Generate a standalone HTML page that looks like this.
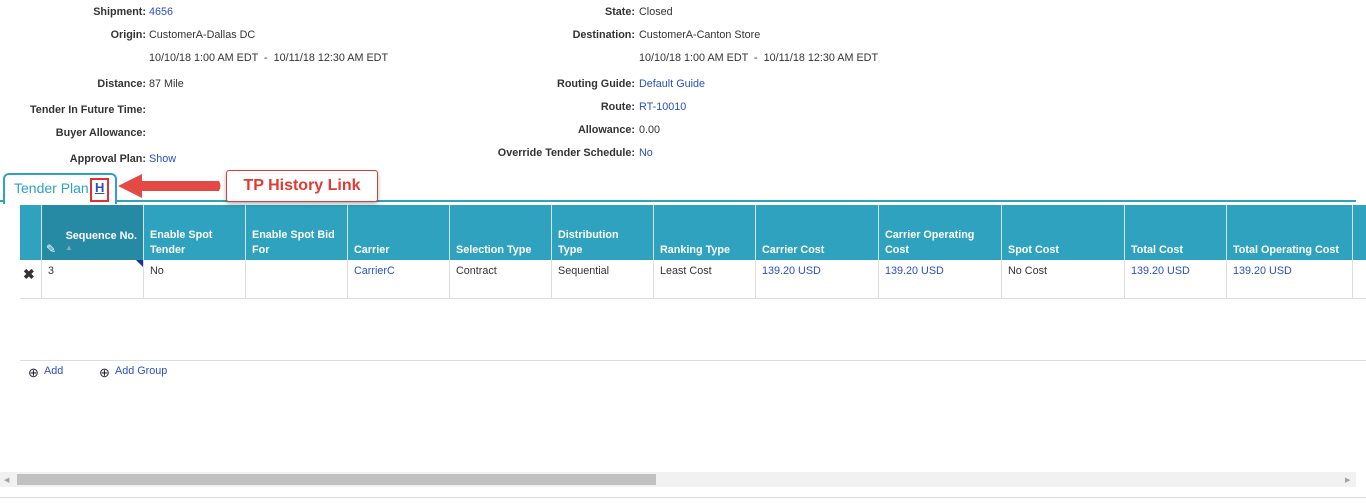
<!DOCTYPE html><html><head><style>
body{margin:0;width:1366px;height:504px;background:#fff;font-family:"Liberation Sans",sans-serif;font-size:10.8px;color:#333;position:relative;overflow:hidden}
.a{position:absolute;white-space:nowrap}
.l{font-weight:bold;text-align:right}
.lk{color:#2a4fc0}
.h{position:absolute;top:205px;height:55px;background:#2ea2be;color:#fff;font-weight:bold;font-size:10.8px;box-sizing:border-box;border-left:1px solid #cfe6ee;padding:0 6px 2px;display:flex;align-items:flex-end;line-height:15px}
.c{position:absolute;top:260px;height:38px;box-sizing:border-box;border-left:1px solid #ddd;padding:5px 6px}
</style></head><body>
<div class="a l" style="right:1220px;top:6px">Shipment:</div><div class="a lk" style="left:149px;top:6px">4656</div>
<div class="a l" style="right:1220px;top:29px">Origin:</div><div class="a" style="left:149px;top:29px">CustomerA-Dallas DC</div>
<div class="a" style="left:149px;top:52px">10/10/18 1:00 AM EDT &nbsp;- &nbsp;10/11/18 12:30 AM EDT</div>
<div class="a l" style="right:1220px;top:78px">Distance:</div><div class="a" style="left:149px;top:78px">87 Mile</div>
<div class="a l" style="right:1220px;top:104px">Tender In Future Time:</div>
<div class="a l" style="right:1220px;top:127px">Buyer Allowance:</div>
<div class="a l" style="right:1220px;top:153px">Approval Plan:</div><div class="a lk" style="left:149px;top:153px">Show</div>
<div class="a l" style="right:731px;top:6px">State:</div><div class="a" style="left:639px;top:6px">Closed</div>
<div class="a l" style="right:731px;top:29px">Destination:</div><div class="a" style="left:639px;top:29px">CustomerA-Canton Store</div>
<div class="a" style="left:639px;top:52px">10/10/18 1:00 AM EDT &nbsp;- &nbsp;10/11/18 12:30 AM EDT</div>
<div class="a l" style="right:731px;top:78px">Routing Guide:</div><div class="a lk" style="left:639px;top:78px">Default Guide</div>
<div class="a l" style="right:731px;top:101px">Route:</div><div class="a lk" style="left:639px;top:101px">RT-10010</div>
<div class="a l" style="right:731px;top:124px">Allowance:</div><div class="a" style="left:639px;top:124px">0.00</div>
<div class="a l" style="right:731px;top:147px">Override Tender Schedule:</div><div class="a lk" style="left:639px;top:147px">No</div>
<div class="a" style="left:0;top:200px;width:1356px;height:2px;background:#2ea2be"></div>
<div class="a" style="left:3px;top:173px;width:110px;height:29px;border:2px solid #2ea2be;border-bottom:none;border-radius:6px 6px 0 0;background:#fff;z-index:2"></div>
<div class="a" style="left:14px;top:180px;font-size:14px;color:#2ea2be;z-index:3">Tender Plan</div>
<div class="a" style="left:90px;top:178px;width:15px;height:20px;border:2px solid #e03030;z-index:3"></div>
<div class="a lk" style="left:95px;top:180px;font-size:13px;font-weight:bold;text-decoration:underline;z-index:3">H</div>
<svg class="a" style="left:116px;top:172px;z-index:4" width="108" height="28"><path d="M2 14 L26 2 L26 9 L103 9 Q106 14 103 19 L26 19 L26 26 Z" fill="#e34a45"/></svg>
<div class="a" style="left:226px;top:170px;width:150px;height:30px;border:1px solid #d04040;border-radius:3px;background:#fff;box-shadow:0 2px 4px rgba(0,0,0,.3);color:#e03a34;font-size:16px;font-weight:bold;text-align:center;line-height:30px;z-index:4">TP History Link</div>
<div class="h" style="left:20px;width:21px;border:none"></div>
<div class="h" style="left:41px;width:102px;background:#268aa5;justify-content:flex-end;align-items:flex-start;padding-top:24px">Sequence No.</div>
<div class="a" style="left:46px;top:242px;color:#fff;font-size:12px">✎</div><div class="a" style="left:65px;top:243px;color:#8ab;font-size:8px">▲</div>
<div class="h" style="left:143px;width:102px">Enable Spot<br>Tender</div>
<div class="h" style="left:245px;width:102px">Enable Spot Bid<br>For</div>
<div class="h" style="left:347px;width:102px">Carrier</div>
<div class="h" style="left:449px;width:102px">Selection Type</div>
<div class="h" style="left:551px;width:102px">Distribution<br>Type</div>
<div class="h" style="left:653px;width:102px">Ranking Type</div>
<div class="h" style="left:755px;width:123px">Carrier Cost</div>
<div class="h" style="left:878px;width:123px">Carrier Operating<br>Cost</div>
<div class="h" style="left:1001px;width:123px">Spot Cost</div>
<div class="h" style="left:1124px;width:102px">Total Cost</div>
<div class="h" style="left:1226px;width:126px">Total Operating Cost</div>
<div class="h" style="left:1352px;width:14px"></div>
<div class="a" style="left:23px;top:266px;font-size:14px;font-weight:bold">✖</div>
<div class="c" style="left:41px;width:102px">3</div>
<div class="a" style="left:136px;top:260px;width:0;height:0;border-left:7px solid transparent;border-top:7px solid #1a2fa0"></div>
<div class="c" style="left:143px;width:102px">No</div>
<div class="c" style="left:245px;width:102px"></div>
<div class="c lk" style="left:347px;width:102px">CarrierC</div>
<div class="c" style="left:449px;width:102px">Contract</div>
<div class="c" style="left:551px;width:102px">Sequential</div>
<div class="c" style="left:653px;width:102px">Least Cost</div>
<div class="c lk" style="left:755px;width:123px">139.20 USD</div>
<div class="c lk" style="left:878px;width:123px">139.20 USD</div>
<div class="c" style="left:1001px;width:123px">No Cost</div>
<div class="c lk" style="left:1124px;width:102px">139.20 USD</div>
<div class="c lk" style="left:1226px;width:126px">139.20 USD</div>
<div class="c" style="left:1352px;width:14px"></div>
<div class="a" style="left:20px;top:298px;width:1346px;height:1px;background:#ddd"></div>
<div class="a" style="left:20px;top:360px;width:1346px;height:1px;background:#ddd"></div>
<div class="a" style="left:28px;top:365px;font-size:13px;color:#223">⊕</div><div class="a lk" style="left:44px;top:365px">Add</div>
<div class="a" style="left:99px;top:365px;font-size:13px;color:#223">⊕</div><div class="a lk" style="left:115px;top:365px">Add Group</div>
<div class="a" style="left:0;top:472px;width:1356px;height:15px;background:#f1f1f1"></div>
<div class="a" style="left:17px;top:474px;width:639px;height:11px;background:#c1c1c1"></div>
<div class="a" style="left:4px;top:476px;color:#a3a3a3;font-size:7px">◀</div>
<div class="a" style="left:1345px;top:476px;color:#a3a3a3;font-size:7px">▶</div>
<div class="a" style="left:0;top:497px;width:1366px;height:1px;background:#ddd"></div>
</body></html>
